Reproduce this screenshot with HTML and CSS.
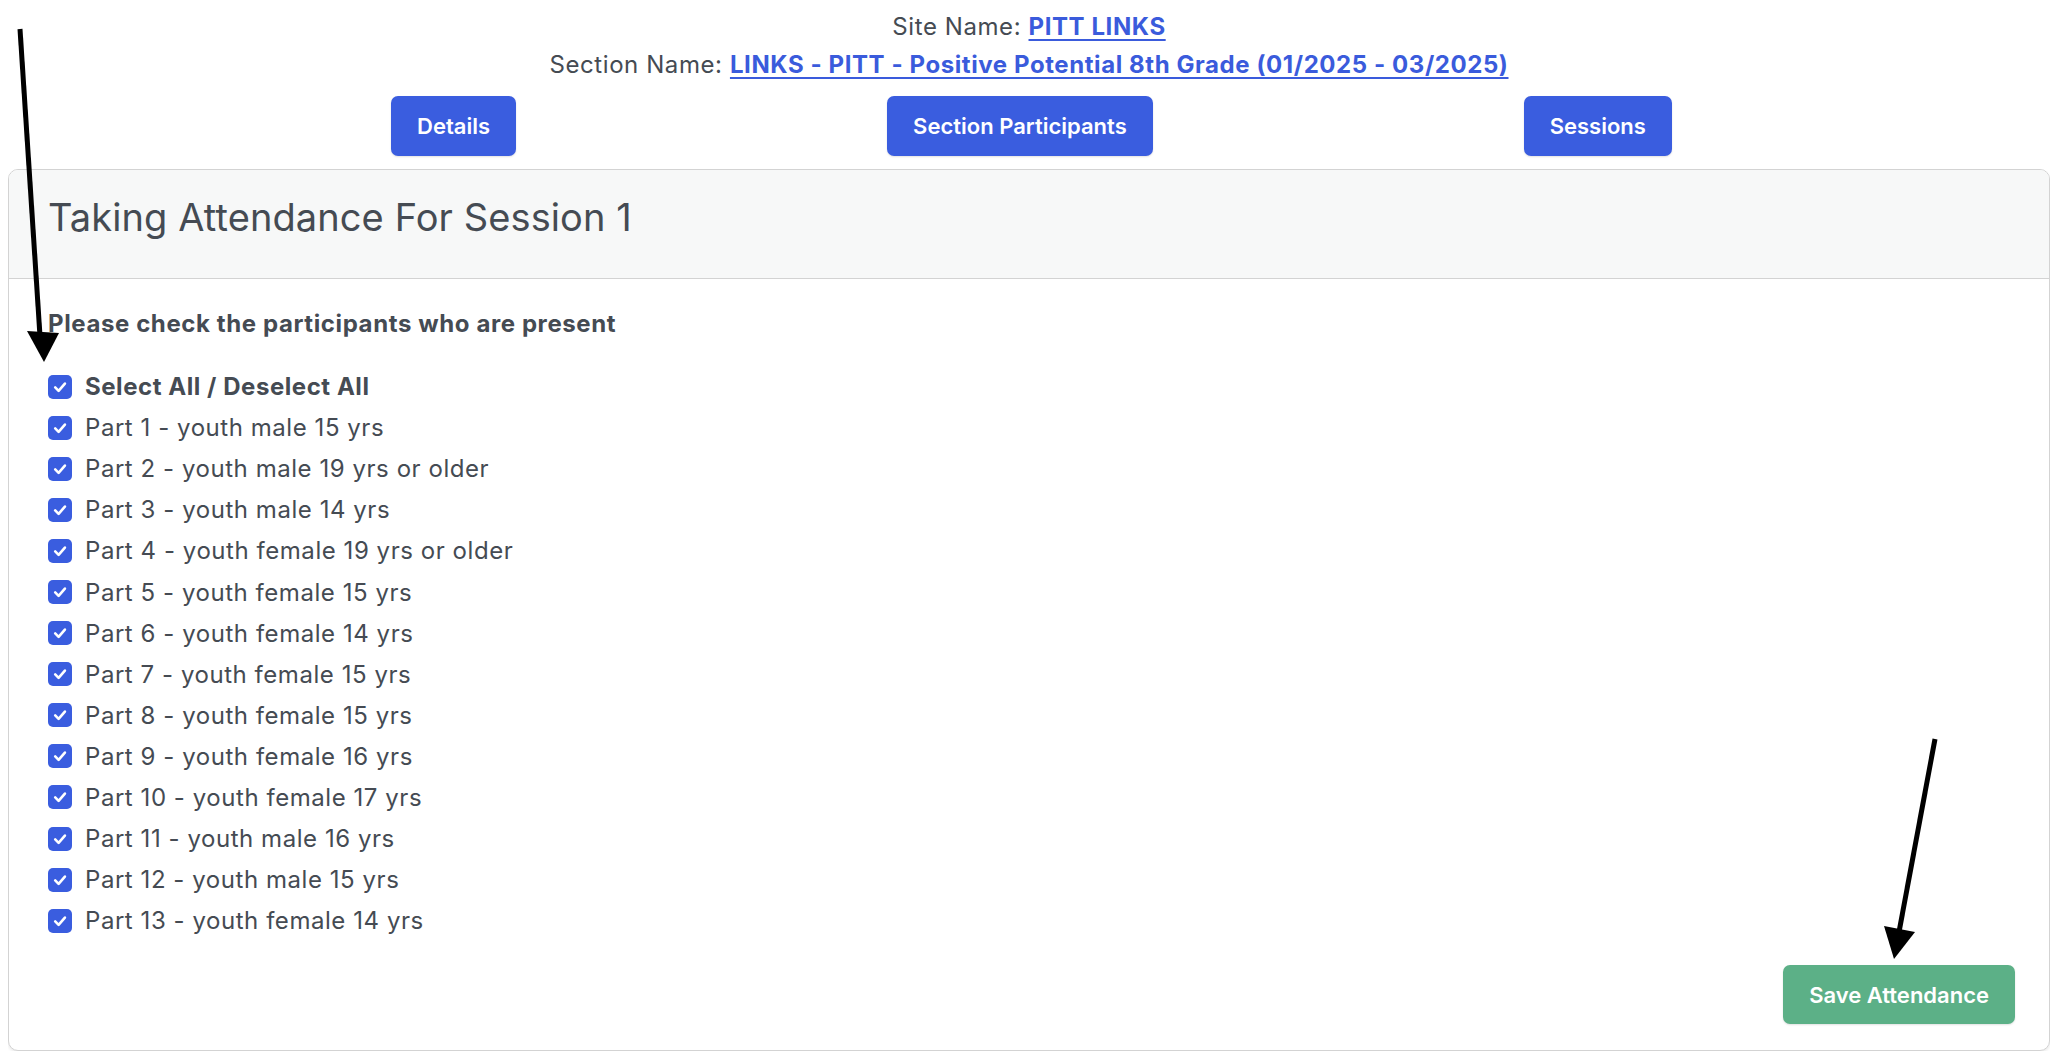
FILE: index.html
```html
<!DOCTYPE html>
<html lang="en">
<head>
<meta charset="utf-8">
<title>Taking Attendance</title>
<link rel="stylesheet" href="styles.css">
</head>
<body>
<header class="info">
  <div class="info-line">Site Name: <a href="#" class="info-link">PITT LINKS</a></div>
  <div class="info-line">Section Name: <a href="#" class="info-link">LINKS - PITT - Positive Potential 8th Grade (01/2025 - 03/2025)</a></div>
</header>
<nav class="tabs">
  <button class="btn btn-blue">Details</button>
  <button class="btn btn-blue">Section Participants</button>
  <button class="btn btn-blue">Sessions</button>
</nav>
<section class="card">
  <div class="card-header">
    <h2 class="card-title">Taking Attendance For Session 1</h2>
  </div>
  <div class="card-body">
    <p class="prompt">Please check the participants who are present</p>
    <ul class="list">
      <li class="row row-all"><span class="cb"><svg viewBox="0 0 24 24" width="24" height="24"><path d="M7.2 12.4 L10.6 15.8 L16.9 8.6" fill="none" stroke="#fff" stroke-width="2.6" stroke-linecap="round" stroke-linejoin="round"/></svg></span><span class="label">Select All / Deselect All</span></li>
      <li class="row"><span class="cb"><svg viewBox="0 0 24 24" width="24" height="24"><path d="M7.2 12.4 L10.6 15.8 L16.9 8.6" fill="none" stroke="#fff" stroke-width="2.6" stroke-linecap="round" stroke-linejoin="round"/></svg></span><span class="label">Part 1 - youth male 15 yrs</span></li>
      <li class="row"><span class="cb"><svg viewBox="0 0 24 24" width="24" height="24"><path d="M7.2 12.4 L10.6 15.8 L16.9 8.6" fill="none" stroke="#fff" stroke-width="2.6" stroke-linecap="round" stroke-linejoin="round"/></svg></span><span class="label">Part 2 - youth male 19 yrs or older</span></li>
      <li class="row"><span class="cb"><svg viewBox="0 0 24 24" width="24" height="24"><path d="M7.2 12.4 L10.6 15.8 L16.9 8.6" fill="none" stroke="#fff" stroke-width="2.6" stroke-linecap="round" stroke-linejoin="round"/></svg></span><span class="label">Part 3 - youth male 14 yrs</span></li>
      <li class="row"><span class="cb"><svg viewBox="0 0 24 24" width="24" height="24"><path d="M7.2 12.4 L10.6 15.8 L16.9 8.6" fill="none" stroke="#fff" stroke-width="2.6" stroke-linecap="round" stroke-linejoin="round"/></svg></span><span class="label">Part 4 - youth female 19 yrs or older</span></li>
      <li class="row"><span class="cb"><svg viewBox="0 0 24 24" width="24" height="24"><path d="M7.2 12.4 L10.6 15.8 L16.9 8.6" fill="none" stroke="#fff" stroke-width="2.6" stroke-linecap="round" stroke-linejoin="round"/></svg></span><span class="label">Part 5 - youth female 15 yrs</span></li>
      <li class="row"><span class="cb"><svg viewBox="0 0 24 24" width="24" height="24"><path d="M7.2 12.4 L10.6 15.8 L16.9 8.6" fill="none" stroke="#fff" stroke-width="2.6" stroke-linecap="round" stroke-linejoin="round"/></svg></span><span class="label">Part 6 - youth female 14 yrs</span></li>
      <li class="row"><span class="cb"><svg viewBox="0 0 24 24" width="24" height="24"><path d="M7.2 12.4 L10.6 15.8 L16.9 8.6" fill="none" stroke="#fff" stroke-width="2.6" stroke-linecap="round" stroke-linejoin="round"/></svg></span><span class="label">Part 7 - youth female 15 yrs</span></li>
      <li class="row"><span class="cb"><svg viewBox="0 0 24 24" width="24" height="24"><path d="M7.2 12.4 L10.6 15.8 L16.9 8.6" fill="none" stroke="#fff" stroke-width="2.6" stroke-linecap="round" stroke-linejoin="round"/></svg></span><span class="label">Part 8 - youth female 15 yrs</span></li>
      <li class="row"><span class="cb"><svg viewBox="0 0 24 24" width="24" height="24"><path d="M7.2 12.4 L10.6 15.8 L16.9 8.6" fill="none" stroke="#fff" stroke-width="2.6" stroke-linecap="round" stroke-linejoin="round"/></svg></span><span class="label">Part 9 - youth female 16 yrs</span></li>
      <li class="row"><span class="cb"><svg viewBox="0 0 24 24" width="24" height="24"><path d="M7.2 12.4 L10.6 15.8 L16.9 8.6" fill="none" stroke="#fff" stroke-width="2.6" stroke-linecap="round" stroke-linejoin="round"/></svg></span><span class="label">Part 10 - youth female 17 yrs</span></li>
      <li class="row"><span class="cb"><svg viewBox="0 0 24 24" width="24" height="24"><path d="M7.2 12.4 L10.6 15.8 L16.9 8.6" fill="none" stroke="#fff" stroke-width="2.6" stroke-linecap="round" stroke-linejoin="round"/></svg></span><span class="label">Part 11 - youth male 16 yrs</span></li>
      <li class="row"><span class="cb"><svg viewBox="0 0 24 24" width="24" height="24"><path d="M7.2 12.4 L10.6 15.8 L16.9 8.6" fill="none" stroke="#fff" stroke-width="2.6" stroke-linecap="round" stroke-linejoin="round"/></svg></span><span class="label">Part 12 - youth male 15 yrs</span></li>
      <li class="row"><span class="cb"><svg viewBox="0 0 24 24" width="24" height="24"><path d="M7.2 12.4 L10.6 15.8 L16.9 8.6" fill="none" stroke="#fff" stroke-width="2.6" stroke-linecap="round" stroke-linejoin="round"/></svg></span><span class="label">Part 13 - youth female 14 yrs</span></li>
    </ul>
    <div class="actions">
      <button class="btn btn-green">Save Attendance</button>
    </div>
  </div>
</section>
<svg class="annot" width="2058" height="1062" viewBox="0 0 2058 1062">
  <line x1="20" y1="29" x2="40" y2="336" stroke="#000" stroke-width="5"/>
  <polygon points="27,331 59,333 44,362" fill="#000"/>
  <line x1="1935" y1="739" x2="1899" y2="932" stroke="#000" stroke-width="5"/>
  <polygon points="1884,926 1915,932 1894,959" fill="#000"/>
</svg>
</body>
</html>
```

FILE: styles.css
```css
* { box-sizing: border-box; }

html, body {
  background: #ffffff;
}

body {
  margin: 8px;
  font-family: Inter, "Noto Sans", "Liberation Sans", sans-serif;
  color: #454b53;
  position: relative;
}

.info {
  text-align: center;
  font-size: 24px;
  line-height: 38px;
  letter-spacing: 0.58px;
}

.info-link {
  color: #3a5bdc;
  font-weight: 700;
  text-decoration: underline;
  text-decoration-thickness: 2px;
  text-underline-offset: 4px;
}

.tabs {
  display: flex;
  justify-content: center;
  gap: 371px;
  margin-top: 12px;
  padding-left: 5px;
}

.btn {
  font-family: Inter, "Noto Sans", "Liberation Sans", sans-serif;
  font-weight: 600;
  font-size: 22px;
  color: #ffffff;
  border: none;
  border-radius: 7px;
  height: 60px;
  padding: 0 26px;
  cursor: pointer;
  box-shadow: 0 1px 2px rgba(0, 0, 0, 0.12);
}

.btn-blue {
  background: #3a5ddf;
}

.btn-green {
  background: #5cb087;
  height: 59px;
  padding: 0 26px;
}

.card {
  margin-top: 13px;
  border: 1px solid #d3d3d3;
  border-radius: 10px;
  background: #ffffff;
  box-shadow: 0 2px 3px rgba(0, 0, 0, 0.08);
  overflow: hidden;
}

.card-header {
  background: #f7f8f8;
  border-bottom: 1px solid #d3d3d3;
  padding: 24px 39px 38px;
}

.card-title {
  margin: 0;
  font-size: 38px;
  line-height: 46px;
  font-weight: 400;
  color: #454b53;
  letter-spacing: 0.1px;
}

.card-body {
  padding: 27px 34px 26px 39px;
}

.prompt {
  margin: 0;
  font-size: 24px;
  line-height: 36px;
  font-weight: 700;
  letter-spacing: 0.6px;
}

.list {
  list-style: none;
  margin: 24px 0 0;
  padding: 0;
}

.row {
  display: flex;
  align-items: center;
  gap: 13px;
  height: 41.1px;
  font-size: 24px;
  letter-spacing: 0.55px;
}

.row-all .label {
  font-weight: 700;
}

.cb {
  width: 24px;
  height: 24px;
  border-radius: 5px;
  background: #3a5ddf;
  display: flex;
  flex: none;
}

.actions {
  display: flex;
  justify-content: flex-end;
  margin-top: 24px;
}

.annot {
  position: absolute;
  left: -8px;
  top: -8px;
  pointer-events: none;
}
```
